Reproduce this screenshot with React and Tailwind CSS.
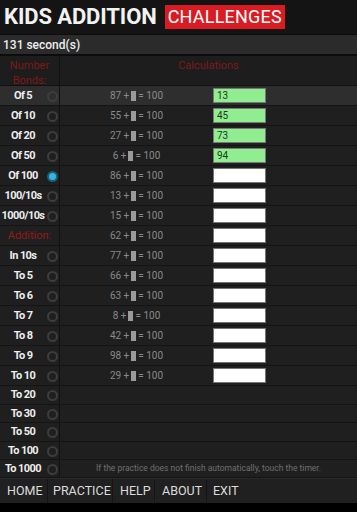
import React from "react";

const rows = [
  { label: "Of 5", a: 87, v: "13", hl: true },
  { label: "Of 10", a: 55, v: "45" },
  { label: "Of 20", a: 27, v: "73" },
  { label: "Of 50", a: 6, v: "94" },
  { label: "Of 100", a: 86, v: "", sel: true },
  { label: "100/10s", a: 13, v: "" },
  { label: "1000/10s", a: 15, v: "" },
  { label: "Addition:", a: 62, v: "", red: true },
  { label: "In 10s", a: 77, v: "" },
  { label: "To 5", a: 66, v: "" },
  { label: "To 6", a: 63, v: "" },
  { label: "To 7", a: 8, v: "" },
  { label: "To 8", a: 42, v: "" },
  { label: "To 9", a: 98, v: "" },
  { label: "To 10", a: 29, v: "" },
];

const extra = [
  { label: "To 20", h: "h-[19px]" },
  { label: "To 30", h: "h-[18px]" },
  { label: "To 50", h: "h-[19px]" },
  { label: "To 100", h: "h-[18px]" },
  { label: "To 1000", h: "h-[18px]", msg: true },
];

function Radio({ sel }) {
  return (
    <div className="w-[12px] flex justify-center">
      {sel ? (
        <div className="w-[11px] h-[11px] rounded-full bg-[#1d5f70] flex items-center justify-center">
          <div className="w-[7px] h-[7px] rounded-full bg-[#33b5e5]" />
        </div>
      ) : (
        <div className="w-[11px] h-[11px] rounded-full border-2 border-[#3d3d3d]" />
      )}
    </div>
  );
}

function Left({ label, sel, red }) {
  if (red) {
    return (
      <div className="w-[60px] h-full flex items-center justify-center border-r border-[#111] text-[11px] text-[#8f1c1c] pt-[1px]">
        {label}
      </div>
    );
  }
  return (
    <div className="w-[60px] h-full flex items-center border-r border-[#111] pt-[1px]">
      <div className="w-[46px] text-center text-[11px] font-bold text-[#eee] tracking-[-0.6px] whitespace-nowrap">{label}</div>
      <Radio sel={sel} />
    </div>
  );
}

export default function App() {
  return (
    <div className="w-[357px] h-[512px] bg-black flex flex-col overflow-hidden" style={{ fontFamily: "Roboto, 'Liberation Sans', sans-serif" }}>
      <div className="h-[34px] bg-[#141414] flex items-center pl-[4px] gap-[8px]">
        <span className="text-[22px] font-bold text-[#f2f2f2] tracking-[-0.1px] leading-none">KIDS ADDITION</span>
        <span className="bg-[#d91c24] text-white text-[18px] leading-[24px] h-[24px] px-[3px] tracking-[0.2px]">CHALLENGES</span>
      </div>
      <div className="h-[22px] bg-[#2b2b2b] border-t border-[#0c0c0c] border-b-2 border-b-[#0c0c0c] flex items-center pl-[3px] text-[12px] font-medium text-[#eee]">
        131 second(s)
      </div>
      <div className="h-[30px] flex bg-[#1d1d1d] border-b border-[#111]">
        <div className="w-[60px] border-r border-[#111] text-center text-[11px] leading-[15px] text-[#7e1a1a] pt-[2px]">
          Number
          <br />
          Bonds:
        </div>
        <div className="flex-1 text-center text-[11px] leading-[15px] text-[#7e1a1a] pt-[2px]">Calculations</div>
      </div>
      {rows.map((r, i) => (
        <div key={i} className={`h-[20px] flex border-b border-[#141414] ${r.hl ? "bg-[#2e2e2e]" : "bg-[#1f1f1f]"}`}>
          <Left label={r.label} sel={r.sel} red={r.red} />
          <div className="flex-1 flex items-center">
            <div className="w-[153px] flex items-center justify-center gap-[1px] text-[10px] text-[#8a8a8a]">
              <span>{r.a} +</span>
              <span className="inline-block w-[5px] h-[10px] mx-[1px] bg-[#9a9a9a]" />
              <span>= 100</span>
            </div>
            <div
              className={`w-[53px] h-[15px] border border-[#777] flex items-center pl-[3px] text-[10px] ${
                r.v ? "bg-[#90ee90] text-[#1a3a1a]" : "bg-white"
              }`}
            >
              {r.v}
            </div>
          </div>
        </div>
      ))}
      {extra.map((r, i) => (
        <div key={i} className={`${r.h} flex border-b border-[#141414] bg-[#1f1f1f]`}>
          <Left label={r.label} />
          <div className="flex-1 flex items-center justify-center text-[8.5px] text-[#707070] whitespace-nowrap">
            {r.msg ? "If the practice does not finish automatically, touch the timer." : ""}
          </div>
        </div>
      ))}
      <div className="h-[25px] bg-[#202020] border-t border-[#2a2a2a] flex items-center text-[12.5px] text-[#dcdcdc]">
        <div className="w-[48px] pl-[7px] h-full flex items-center border-r border-[#141414]">HOME</div>
        <div className="w-[65px] pl-[5px] h-full flex items-center border-r border-[#141414]">PRACTICE</div>
        <div className="w-[42px] pl-[7px] h-full flex items-center border-r border-[#141414]">HELP</div>
        <div className="w-[52px] pl-[7px] h-full flex items-center border-r border-[#141414]">ABOUT</div>
        <div className="pl-[6px] h-full flex items-center">EXIT</div>
      </div>
      <div className="flex-1 bg-black" />
    </div>
  );
}
